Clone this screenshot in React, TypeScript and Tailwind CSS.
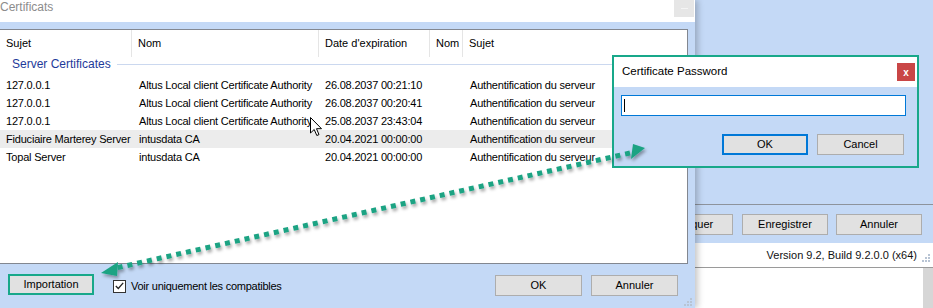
import React from 'react';

const rows = [
  { sujet: '127.0.0.1', nom: 'Altus Local client Certificate Authority', date: '26.08.2037 00:21:10', usage: 'Authentification du serveur' },
  { sujet: '127.0.0.1', nom: 'Altus Local client Certificate Authority', date: '26.08.2037 00:20:41', usage: 'Authentification du serveur' },
  { sujet: '127.0.0.1', nom: 'Altus Local client Certificate Authority', date: '25.08.2037 23:43:04', usage: 'Authentification du serveur' },
  { sujet: 'Fiduciaire Marterey Server', nom: 'intusdata CA', date: '20.04.2021 00:00:00', usage: 'Authentification du serveur', hover: true },
  { sujet: 'Topal Server', nom: 'intusdata CA', date: '20.04.2021 00:00:00', usage: 'Authentification du serveur' },
];

// column widths of the list view, left to right
const cols = ['w-[132px]', 'w-[187px]', 'w-[111px]', 'w-[33px]', 'flex-1'];
const headers = ['Sujet', 'Nom', "Date d'expiration", 'Nom', 'Sujet'];

const Grip = () => (
  <svg width="8" height="8" viewBox="0 0 8 8">
    <rect x="6" y="0" width="2" height="2" fill="#b8c4d4" />
    <rect x="3" y="3" width="2" height="2" fill="#b8c4d4" />
    <rect x="6" y="3" width="2" height="2" fill="#b8c4d4" />
    <rect x="0" y="6" width="2" height="2" fill="#b8c4d4" />
    <rect x="3" y="6" width="2" height="2" fill="#b8c4d4" />
    <rect x="6" y="6" width="2" height="2" fill="#b8c4d4" />
  </svg>
);

const WinButton: React.FC<{ label: string; className?: string }> = ({ label, className = '' }) => (
  <div className={`h-[21px] bg-[#e1e1e1] border border-[#adadad] flex items-center justify-center ${className}`}>
    {label}
  </div>
);

const App: React.FC = () => {
  return (
    <div className="relative w-[933px] h-[308px] overflow-hidden flex bg-white text-[11px] text-black font-['Liberation_Sans',Arial,sans-serif]">
      {/* Certificats window */}
      <div className="relative z-10 w-[695px] h-full flex flex-col shadow-[3px_0_6px_rgba(0,0,0,0.22)]">
        <div className="h-[22px] bg-white flex items-start justify-between">
          <span className="text-[12px] leading-[14px] text-[#8c8c8c]">Certificats</span>
          <div className="w-[20px] h-[17px] mr-[1px] bg-[#e6e6e6] flex items-center justify-center">
            <div className="w-[7px] h-[1px] bg-[#f4f4f4]" />
          </div>
        </div>

        <div className="flex-1 bg-[#c4d9f6] flex flex-col pt-[7px]">
          {/* list view */}
          <div className="w-[688px] h-[235px] bg-white border border-l-0 border-[#828790] flex flex-col">
            <div className="h-[27px] flex">
              {headers.map((h, i) => (
                <div
                  key={i}
                  className={`${cols[i]} h-full flex items-center pl-[6px] ${i < 4 ? 'border-r border-[#e5e5e5]' : ''}`}
                >
                  {h}
                </div>
              ))}
            </div>

            <div className="h-[19px] pb-[5px] flex items-center pl-[12px]">
              <span className="text-[12px] text-[#1e3a9a]">Server Certificates</span>
              <div className="flex-1 h-[1px] bg-[#cbd8ef] ml-[6px]" />
            </div>

            {rows.map((r, i) => (
              <div key={i} className={`h-[18px] flex items-center tracking-[-0.2px] ${r.hover ? 'bg-[#ececec]' : ''}`}>
                <div className={`${cols[0]} pl-[6px] whitespace-nowrap`}>{r.sujet}</div>
                <div className={`${cols[1]} pl-[7px] whitespace-nowrap`}>{r.nom}</div>
                <div className={`${cols[2]} pl-[6px] whitespace-nowrap`}>{r.date}</div>
                <div className={cols[3]} />
                <div className={`${cols[4]} pl-[7px] whitespace-nowrap`}>{r.usage}</div>
              </div>
            ))}
          </div>

          {/* bottom bar */}
          <div className="flex items-start pt-[10px]">
            <div className="ml-[8px] w-[86px] h-[21px] bg-[#e1e1e1] border-2 border-[#18a88a] flex items-center justify-center">
              Importation
            </div>
            <div className="ml-[19px] mt-[4px] flex items-center">
              <div className="w-[13px] h-[13px] bg-white border border-[#333] flex items-center justify-center">
                <svg width="9" height="8" viewBox="0 0 9 8">
                  <path d="M0.8 4 L3.3 6.5 L8.2 0.8" fill="none" stroke="#222" strokeWidth="1.3" />
                </svg>
              </div>
              <span className="ml-[5px] tracking-[-0.25px]">Voir uniquement les compatibles</span>
            </div>
            <div className="flex-1" />
            <WinButton label="OK" className="w-[87px] mt-[1px]" />
            <WinButton label="Annuler" className="w-[87px] ml-[9px] mr-[17px] mt-[1px]" />
          </div>
        </div>

        <div className="absolute right-[3px] bottom-[2px]">
          <Grip />
        </div>
      </div>

      {/* window behind */}
      <div className="w-[238px] h-full flex flex-col">
        <div className="h-[204px] bg-[#c4d9f6]" />
        <div className="bg-[#c4d9f6] border-t border-[#8d939c] flex pt-[9px] pb-[8px]">
          <WinButton label="Appliquer" className="w-[86px] ml-[-48px]" />
          <WinButton label="Enregistrer" className="w-[86px] ml-[9px]" />
          <WinButton label="Annuler" className="w-[86px] ml-[8px]" />
        </div>
        <div className="h-[24px] bg-white flex items-center justify-end">
          <span className="text-[#111]">Version 9.2, Build 9.2.0.0 (x64)</span>
          <div className="w-[16px] flex justify-end pr-[3px] mt-[6px]">
            <Grip />
          </div>
        </div>
        <div className="flex-1 flex border-t border-[#9a9a9a]">
          <div className="flex-1 bg-white" />
          <div className="w-[10px] bg-[#d6d6d6]" />
        </div>
      </div>

      {/* Certificate Password dialog */}
      <div className="absolute left-[612px] top-[55px] z-20 w-[307px] h-[113px] border-2 border-[#18a88a] bg-[#c4d9f6] flex flex-col">
        <div className="h-[30px] bg-white flex items-center justify-between">
          <span className="pl-[8px] text-[11.5px]">Certificate Password</span>
          <div className="w-[18px] h-[18px] mr-[2px] bg-[#c94646] text-white text-[10px] font-bold flex items-center justify-center">
            x
          </div>
        </div>
        <div className="mt-[8px] ml-[7px] w-[285px] h-[21px] bg-white border border-[#0078d7] flex items-center pl-[2px]">
          <div className="w-[1px] h-[13px] bg-black" />
        </div>
        <div className="flex justify-end mt-[18px] mr-[13px]">
          <div className="w-[86px] h-[21px] bg-[#e1e1e1] border-2 border-[#0078d7] flex items-center justify-center">OK</div>
          <WinButton label="Cancel" className="w-[87px] ml-[9px]" />
        </div>
      </div>

      {/* mouse pointer */}
      <svg className="absolute left-[310px] top-[117px] z-30" width="13" height="20" viewBox="0 0 13 20">
        <path d="M0.5 0.5 L0.5 16 L4.2 12.5 L6.8 18.5 L9 17.6 L6.5 11.7 L11.5 11.7 Z" fill="#fff" stroke="#000" strokeWidth="1" />
      </svg>

      {/* dotted teal arrow between the two buttons */}
      <svg className="absolute inset-0 z-40 pointer-events-none" width="933" height="308" viewBox="0 0 933 308">
        <defs>
          <filter id="sh" x="-10%" y="-10%" width="120%" height="120%">
            <feDropShadow dx="1.5" dy="2.5" stdDeviation="1.5" floodColor="#000" floodOpacity="0.35" />
          </filter>
        </defs>
        <g filter="url(#sh)" fill="#1aa383">
          <line x1="630" y1="153" x2="116" y2="268" stroke="#1aa383" strokeWidth="5" strokeDasharray="5 5" />
          <polygon points="645,148 633,144 631,159" />
          <polygon points="101,273 118,262 117,276" />
        </g>
      </svg>
    </div>
  );
};

export default App;
